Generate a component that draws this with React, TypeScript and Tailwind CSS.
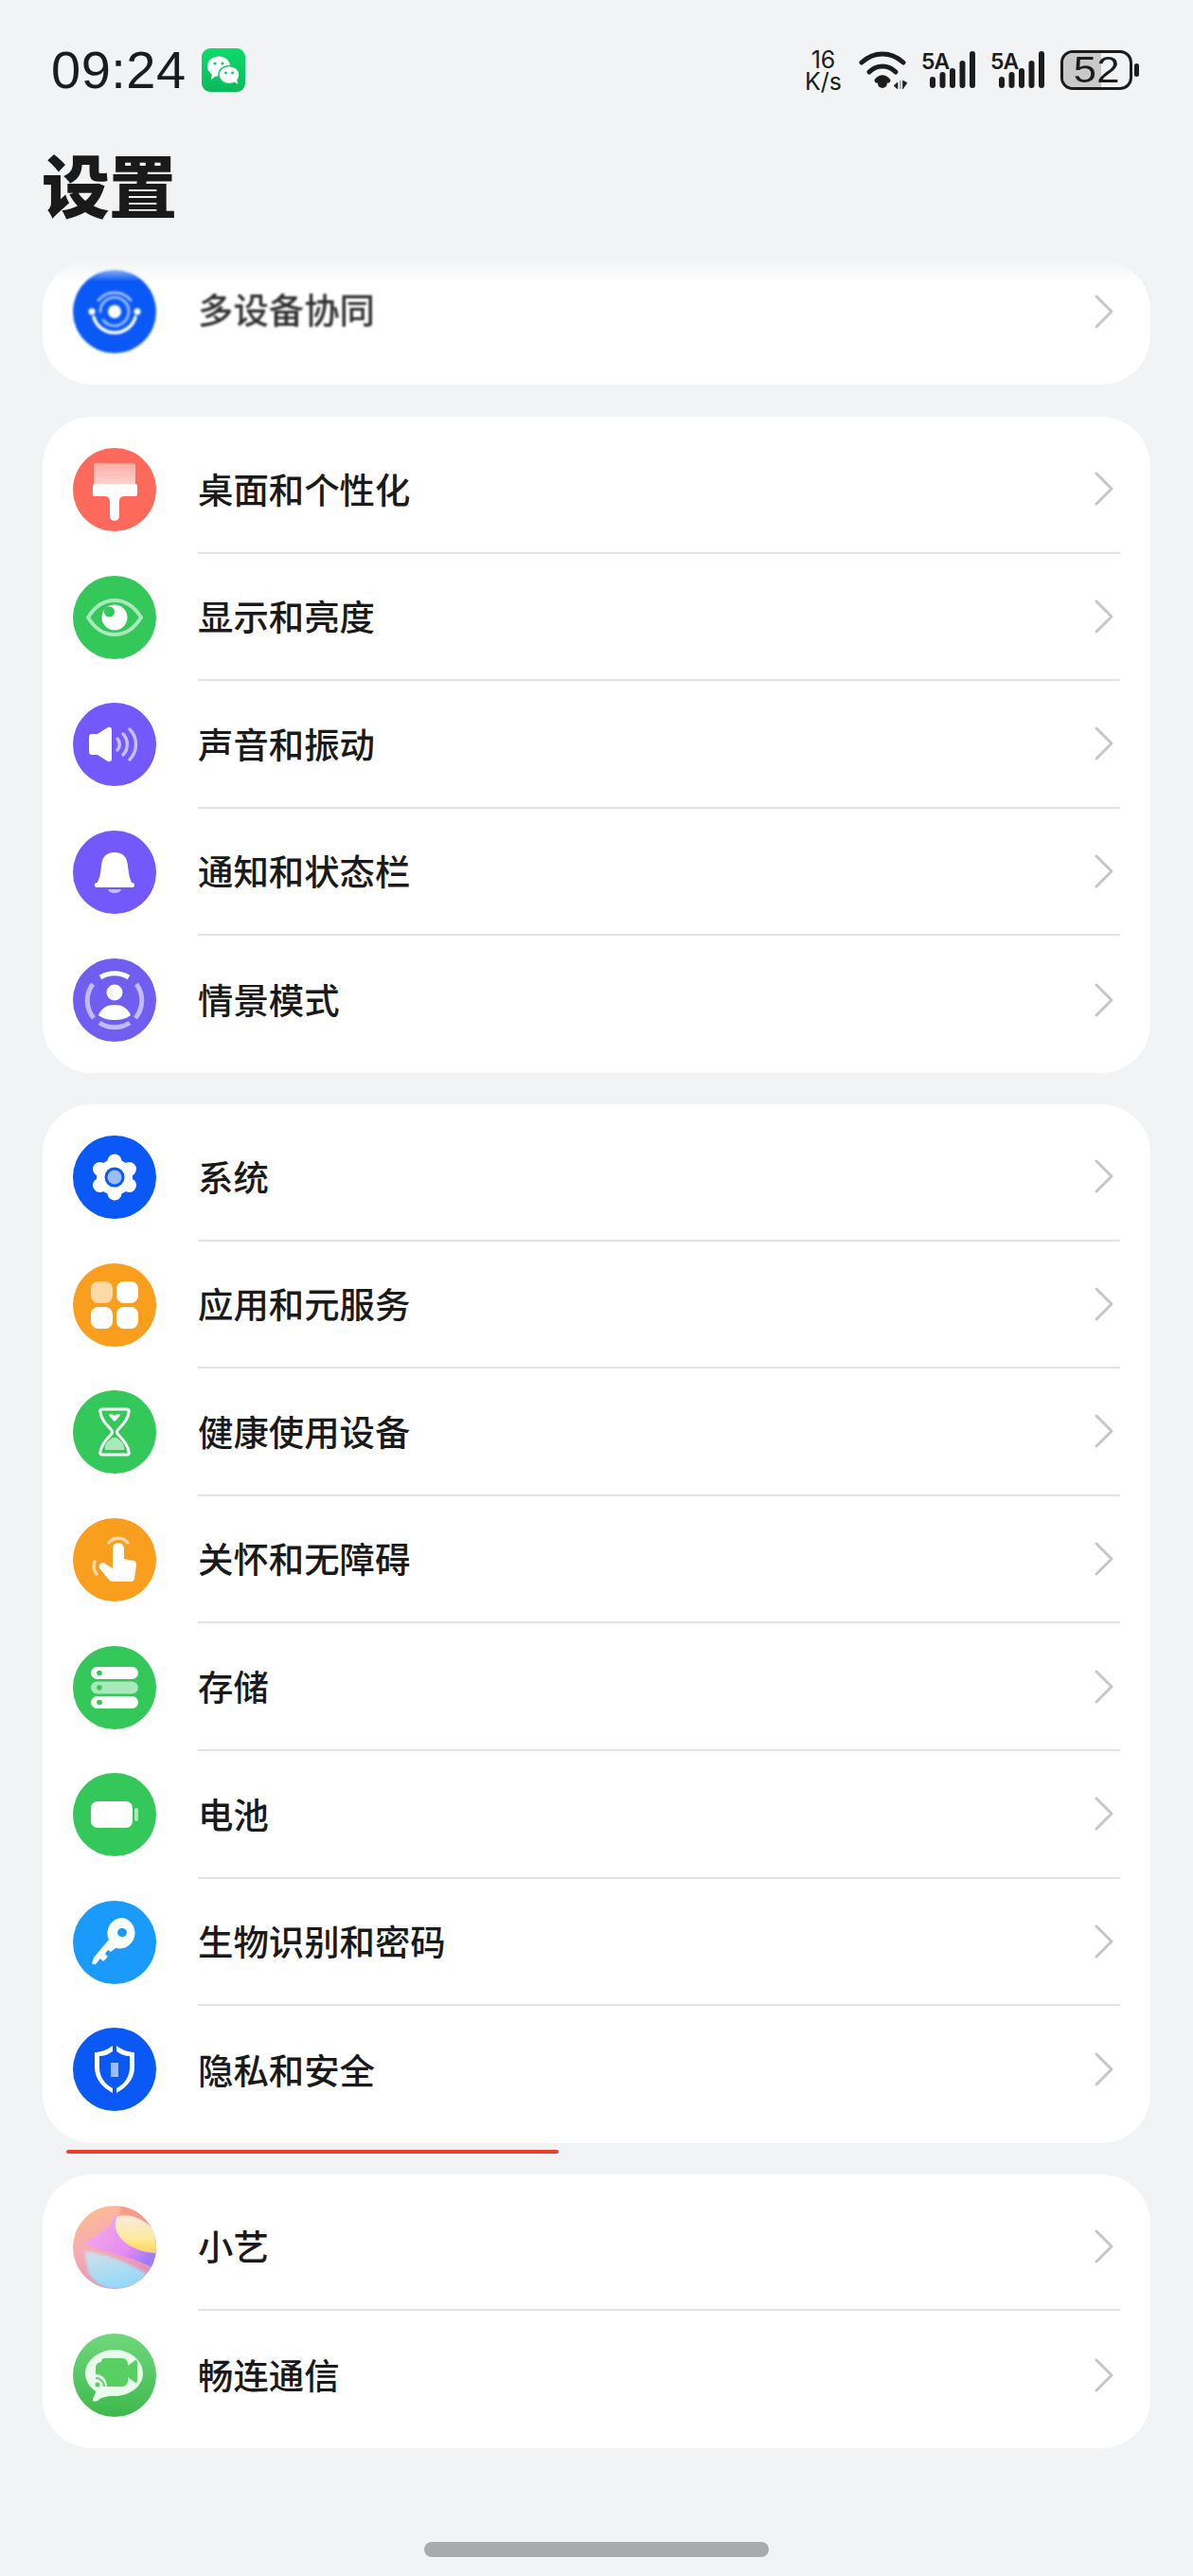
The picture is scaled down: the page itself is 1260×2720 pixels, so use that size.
import React from 'react';

const Chevron = () => (
  <svg width="22" height="38" viewBox="0 0 22 38" fill="none" className="shrink-0">
    <path d="M3 3 L19 19 L3 35" stroke="#c6c6c6" strokeWidth="3" strokeLinecap="round" strokeLinejoin="round" />
  </svg>
);

const Circle: React.FC<{ bg: string; children: React.ReactNode }> = ({ bg, children }) => (
  <svg width="88" height="88" viewBox="0 0 88 88" className="shrink-0">
    <circle cx="44" cy="44" r="44" fill={bg} />
    {children}
  </svg>
);

const MultiDevice = () => (
  <Circle bg="#0a59f7">
    <g fill="none" strokeLinecap="round">
      <path d="M22 50 A23 23 0 0 0 66 50" stroke="#fff" strokeWidth="3.5" />
      <path d="M27 32 A22 22 0 0 1 61 32" stroke="#fff" strokeOpacity="0.6" strokeWidth="3" />
      <path d="M29 44 A15 15 0 0 1 59 44 M59 44 A15 15 0 0 1 32 53" stroke="#fff" strokeOpacity="0.55" strokeWidth="3" />
    </g>
    <circle cx="44" cy="44" r="7" fill="#fff" />
    <circle cx="20" cy="44" r="3.5" fill="#fff" />
    <circle cx="68" cy="44" r="3.5" fill="#fff" />
  </Circle>
);

const Brush = () => (
  <Circle bg="#fd6a5b">
    <defs>
      <linearGradient id="brushHead" x1="0" y1="0" x2="0" y2="1">
        <stop offset="0" stopColor="#fbaea8" />
        <stop offset="1" stopColor="#fdd3cf" />
      </linearGradient>
    </defs>
    <path d="M24 16 H64 A2 2 0 0 1 66 18 V39 H22 V18 A2 2 0 0 1 24 16Z" fill="url(#brushHead)" />
    <path d="M23 38 H66 A2 2 0 0 1 68 40 V49 A2 2 0 0 1 66 51 H54 C50 51 49 54 49 57 V72 A5 5 0 0 1 39 72 V57 C39 54 38 51 34 51 H23 A2 2 0 0 1 21 49 V40 A2 2 0 0 1 23 38Z" fill="#fff" />
  </Circle>
);

const Eye = () => (
  <Circle bg="#34c759">
    <path d="M16 44 C24 31 34 26 44 26 C54 26 64 31 72 44 C64 57 54 62 44 62 C34 62 24 57 16 44Z" fill="none" stroke="#a9e8bb" strokeWidth="4" />
    <circle cx="44" cy="44" r="13.5" fill="#fff" />
    <circle cx="38.5" cy="38" r="5.5" fill="#34c759" />
  </Circle>
);

const Speaker = () => (
  <Circle bg="#7358fb">
    <path d="M17 36 A3 3 0 0 1 20 33 H26 L37 26 A3 3 0 0 1 41 28 V60 A3 3 0 0 1 37 62 L26 55 H20 A3 3 0 0 1 17 52Z" fill="#fff" />
    <g fill="none" stroke="#c9bdfd" strokeWidth="3.5" strokeLinecap="round">
      <path d="M47 38 A9 9 0 0 1 47 50" />
      <path d="M53 33 A16 16 0 0 1 53 55" />
      <path d="M60 28 A23 23 0 0 1 60 60" />
    </g>
  </Circle>
);

const Bell = () => (
  <Circle bg="#7358fb">
    <path d="M44 23 C35 23 31 28 30 37 C29 46 28 52 25 56 H63 C60 52 59 46 58 37 C57 28 53 23 44 23Z" fill="#fff" />
    <rect x="23" y="55" width="42" height="5" rx="2.5" fill="#fff" />
    <path d="M37 62 H51 A7 4 0 0 1 37 62Z" fill="#c9bdfd" />
  </Circle>
);

const Scene = () => (
  <Circle bg="#6f5ef0">
    <g fill="none" stroke="#c3baf9" strokeWidth="5">
      <path d="M29 20 A29 29 0 0 1 59 20" stroke="#fff" />
      <path d="M21 27 A29 29 0 0 0 22 63" />
      <path d="M67 27 A29 29 0 0 1 66 63" />
      <path d="M28 68 A29 29 0 0 0 60 68" />
    </g>
    <circle cx="44" cy="36" r="8.5" fill="#fff" />
    <path d="M27 60 C30 52 37 49 44 49 C51 49 58 52 61 60 C56 64 50 65 44 65 C38 65 32 64 27 60Z" fill="#fff" />
  </Circle>
);

const Gear = () => (
  <Circle bg="#0a59f7">
    <circle cx="44" cy="44" r="19" fill="#fff" />
    <circle cx="44" cy="27" r="7.5" fill="#fff" />
    <circle cx="59.5" cy="35.5" r="7.5" fill="#fff" />
    <circle cx="59.5" cy="52.5" r="7.5" fill="#fff" />
    <circle cx="44" cy="61" r="7.5" fill="#fff" />
    <circle cx="28.5" cy="52.5" r="7.5" fill="#fff" />
    <circle cx="28.5" cy="35.5" r="7.5" fill="#fff" />
    <circle cx="44" cy="44" r="10.5" fill="#0a59f7" />
    <circle cx="44" cy="44" r="7.5" fill="#9cbdfb" />
  </Circle>
);

const Apps = () => (
  <Circle bg="#fa9e1e">
    <rect x="19" y="19" width="23" height="23" rx="8" fill="#fdd9a8" />
    <rect x="46" y="19" width="23" height="23" rx="8" fill="#fff" />
    <rect x="19" y="46" width="23" height="23" rx="8" fill="#fff" />
    <rect x="46" y="46" width="23" height="23" rx="8" fill="#fff" />
  </Circle>
);

const Hourglass = () => (
  <Circle bg="#34c759">
    <path d="M34 63 L54 63 C55 56 50 53 46 50 L42 50 C38 53 33 56 34 63Z" fill="#a9e8bb" />
    <path d="M31 20 H57 A2 2 0 0 1 59 23 C58 32 52 37 48 41 Q45 44 48 47 C52 51 58 57 59 65 A2 2 0 0 1 57 68 H31 A2 2 0 0 1 29 65 C30 57 36 51 40 47 Q43 44 40 41 C36 37 30 32 29 23 A2 2 0 0 1 31 20Z" fill="none" stroke="#fff" strokeWidth="3" />
    <path d="M44 33 C41 30 38 27 38 26 C39 24 42 25 44 27 C46 25 49 24 50 26 C50 27 47 30 44 33Z" fill="#fff" />
  </Circle>
);

const Hand = () => (
  <Circle bg="#fa9e1e">
    <path d="M38 26 A13 13 0 0 1 58 26" fill="none" stroke="#fdd9a8" strokeWidth="3.5" strokeLinecap="round" />
    <path d="M23 46 A13 13 0 0 0 25 59" fill="none" stroke="#fdd9a8" strokeWidth="3.5" strokeLinecap="round" />
    <path d="M42 32 A6 6 0 0 1 54 32 V43 L64 45 A4 4 0 0 1 67 49 L65 64 A4 4 0 0 1 61 67 H42 A5 5 0 0 1 38 65 L28 53 A4 4 0 0 1 34 48 L42 53Z" fill="#fff" />
  </Circle>
);

const Storage = () => (
  <Circle bg="#34c759">
    <rect x="19" y="22" width="50" height="13" rx="6.5" fill="#fff" />
    <rect x="19" y="37.5" width="50" height="13" rx="6.5" fill="#a9e8bb" />
    <rect x="19" y="53" width="50" height="13" rx="6.5" fill="#fff" />
    <circle cx="28" cy="28.5" r="2.8" fill="#34c759" />
    <circle cx="28" cy="44" r="2.8" fill="#34c759" />
    <circle cx="28" cy="59.5" r="2.8" fill="#34c759" />
  </Circle>
);

const BatteryIcon = () => (
  <Circle bg="#34c759">
    <rect x="19" y="30" width="44" height="28" rx="7" fill="#fff" />
    <rect x="65" y="37" width="4" height="14" rx="2" fill="#a9e8bb" />
  </Circle>
);

const Key = () => (
  <Circle bg="#1a9bfb">
    <path fillRule="evenodd" d="M53 18 A16 16 0 1 1 45 50 L40 54 L37 52 L34 56 L37 59 L32 64 L29 61 L25 66 A3 3 0 0 1 20 66 L22 60 L38 41 A16 16 0 0 1 53 18Z M52 29 A5 4.5 0 1 0 52 38 A5 4.5 0 1 0 52 29Z" fill="#fff" />
  </Circle>
);

const Shield = () => (
  <Circle bg="#0a59f7">
    <path d="M42 19 C35 24 29 26 23 26 V42 C23 54 31 63 42 69 V64 C34 60 28 52 28 42 V30 C33 30 38 28 42 25Z" fill="#fff" />
    <path d="M46 19 C53 24 59 26 65 26 V42 C65 54 57 63 46 69 V64 C54 60 60 52 60 42 V30 C55 30 50 28 46 25Z" fill="#fff" />
    <rect x="40" y="37" width="8" height="15" fill="#9cbdfb" />
  </Circle>
);

const Orb = () => (
  <svg width="88" height="88" viewBox="0 0 88 88" className="shrink-0">
    <defs>
      <clipPath id="orbClip"><circle cx="44" cy="44" r="44" /></clipPath>
      <filter id="orbSoft" x="-20%" y="-20%" width="140%" height="140%">
        <feGaussianBlur stdDeviation="1.6" />
      </filter>
      <linearGradient id="orbBase" x1="0" y1="0" x2="0.4" y2="1">
        <stop offset="0" stopColor="#fdc08a" />
        <stop offset="0.55" stopColor="#f6a9b4" />
        <stop offset="1" stopColor="#e88fb5" />
      </linearGradient>
      <linearGradient id="orbPink" x1="0" y1="0" x2="1" y2="0.6">
        <stop offset="0" stopColor="#f5b1e8" />
        <stop offset="0.7" stopColor="#e58bf2" />
        <stop offset="1" stopColor="#9a7dfa" />
      </linearGradient>
      <linearGradient id="orbBlue" x1="0.2" y1="0" x2="0.6" y2="1">
        <stop offset="0" stopColor="#cfe0ea" />
        <stop offset="1" stopColor="#8fd8fb" />
      </linearGradient>
      <linearGradient id="orbYellow" x1="0" y1="0" x2="0" y2="1">
        <stop offset="0" stopColor="#fbeadb" />
        <stop offset="0.6" stopColor="#fdeaa0" />
        <stop offset="0.8" stopColor="#fde26e" />
        <stop offset="1" stopColor="#fbc98a" />
      </linearGradient>
    </defs>
    <g clipPath="url(#orbClip)">
      <rect width="88" height="88" fill="url(#orbBase)" />
      <rect x="50" y="0" width="38" height="24" fill="#f4957f" opacity="0.75" filter="url(#orbSoft)" />
      <path d="M44 10 C42 22 30 28 12 40 C24 48 50 48 90 68 L90 30 Z" fill="url(#orbPink)" />
      <path d="M12 48 C36 50 62 62 78 72 C66 92 30 96 16 70 Z" fill="url(#orbBlue)" filter="url(#orbSoft)" />
      <path d="M46 12 C60 6 80 16 88 30 L88 50 C66 50 38 34 46 12Z" fill="url(#orbYellow)" />
    </g>
  </svg>
);

const Changlian = () => (
  <svg width="88" height="88" viewBox="0 0 88 88" className="shrink-0">
    <defs>
      <linearGradient id="clBg" x1="0" y1="0" x2="0" y2="1">
        <stop offset="0" stopColor="#6fd87c" />
        <stop offset="1" stopColor="#3fb84c" />
      </linearGradient>
    </defs>
    <circle cx="44" cy="44" r="44" fill="url(#clBg)" />
    <path d="M44 17 C60 17 74 28 74 42 C74 56 60 66 44 66 C38 66 32 66 26 71 C23 72 20 72 21 69 C22 66 24 64 24 61 C17 56 13 49 13 42 C13 28 28 17 44 17Z" fill="#e9fbeb" />
    <path d="M30 30 A4 4 0 0 1 34 26 H52 A6 6 0 0 1 58 32 V34 L66 28 A2 2 0 0 1 68 30 V50 A2 2 0 0 1 66 52 L58 46 V50 A6 6 0 0 1 52 56 H36 C36 48 30 42 24 41 V36 A6 6 0 0 1 30 30Z" fill="#57cf62" />
    <circle cx="26" cy="54" r="2.5" fill="#57cf62" />
    <path d="M24 47 A9 9 0 0 1 33 56 M24 42 A14 14 0 0 1 38 56" fill="none" stroke="#57cf62" strokeWidth="2" />
  </svg>
);

const WeChat = () => (
  <svg width="46" height="46" viewBox="0 0 46 46" className="ml-[16px] shrink-0">
    <defs>
      <linearGradient id="wxBg" x1="0" y1="0" x2="0" y2="1">
        <stop offset="0" stopColor="#0bdc6c" />
        <stop offset="1" stopColor="#0cb95a" />
      </linearGradient>
    </defs>
    <rect width="46" height="46" rx="9" fill="url(#wxBg)" />
    <ellipse cx="18" cy="19" rx="12" ry="10.5" fill="#fff" />
    <path d="M11 26 L10 33 L17 28Z" fill="#fff" />
    <ellipse cx="29" cy="28" rx="11" ry="9.5" stroke="#0bc964" strokeWidth="1.5" fill="#fff" />
    <path d="M34 35 L38 38 L37 32Z" fill="#fff" />
    <circle cx="14" cy="16" r="1.6" fill="#0bc964" />
    <circle cx="22" cy="16" r="1.6" fill="#0bc964" />
    <circle cx="25.5" cy="26" r="1.4" fill="#0bc964" />
    <circle cx="32.5" cy="26" r="1.4" fill="#0bc964" />
  </svg>
);

const Wifi = () => (
  <svg width="52" height="40" viewBox="0 0 52 40" className="shrink-0">
    <g fill="none" stroke="#1c1c1c" strokeWidth="5" strokeLinecap="round">
      <path d="M3 12 C16 0 34 0 47 12" />
      <path d="M11 22 C19 14 31 14 39 22" />
      <path d="M19 31 C23 27 27 27 31 31" />
    </g>
    <circle cx="25" cy="34" r="5" fill="#1c1c1c" />
    <path d="M41 33 L37 36.5 L41 40Z M44 31 V40 M46.5 31 V40 L51 33.5Z" fill="#1c1c1c" stroke="#1c1c1c" strokeWidth="0.6" />
  </svg>
);

const Signal = () => (
  <div className="relative w-[58px] h-[40px] shrink-0">
    <svg width="58" height="40" viewBox="0 0 58 40" className="block">
      <rect x="9" y="27" width="6" height="12" rx="3" fill="#1c1c1c" />
      <rect x="19.5" y="22" width="6" height="17" rx="3" fill="#1c1c1c" />
      <rect x="30" y="18" width="6" height="21" rx="3" fill="#1c1c1c" />
      <rect x="40.5" y="10" width="6" height="29" rx="3" fill="#1c1c1c" />
      <rect x="51" y="0" width="6" height="39" rx="3" fill="#1c1c1c" />
    </svg>
    <span className="absolute left-0 top-0 text-[23px] leading-[23px] font-semibold tracking-[-1px] text-[#1c1c1c] [font-family:'Inter',sans-serif]">5A</span>
  </div>
);

const BatteryStatus = () => (
  <div className="flex items-center shrink-0">
    <div className="relative w-[76px] h-[42px] rounded-[13px] border-[3px] border-[#1c1c1c] overflow-hidden bg-[#f1f3f5] flex items-center justify-center">
      <div className="absolute inset-y-0 left-0 w-[40px] bg-[#c9c9c9]" />
      <span className="relative text-[38px] leading-none text-[#1c1c1c] [font-family:'Liberation_Sans',sans-serif] scale-x-[1.15]">52</span>
    </div>
    <div className="ml-[2px] w-[5px] h-[14px] rounded-full bg-[#1c1c1c]" />
  </div>
);

type Item = { label: string; icon: React.ReactNode };

const group1: Item[] = [
  { label: '桌面和个性化', icon: <Brush /> },
  { label: '显示和亮度', icon: <Eye /> },
  { label: '声音和振动', icon: <Speaker /> },
  { label: '通知和状态栏', icon: <Bell /> },
  { label: '情景模式', icon: <Scene /> },
];

const group2: Item[] = [
  { label: '系统', icon: <Gear /> },
  { label: '应用和元服务', icon: <Apps /> },
  { label: '健康使用设备', icon: <Hourglass /> },
  { label: '关怀和无障碍', icon: <Hand /> },
  { label: '存储', icon: <Storage /> },
  { label: '电池', icon: <BatteryIcon /> },
  { label: '生物识别和密码', icon: <Key /> },
  { label: '隐私和安全', icon: <Shield /> },
];

const group3: Item[] = [
  { label: '小艺', icon: <Orb /> },
  { label: '畅连通信', icon: <Changlian /> },
];

const Row: React.FC<{ item: Item; last: boolean }> = ({ item, last }) => (
  <div className="flex items-center h-[134.6px] pl-[32px] pr-[32px]">
    {item.icon}
    <div className={`ml-[44px] flex-1 h-full flex items-center justify-between pr-[6px] ${last ? '' : 'border-b-2 border-[#e3e3e3]'}`}>
      <span className="text-[37.4px] leading-none font-medium text-[#1a1a1a]">{item.label}</span>
      <Chevron />
    </div>
  </div>
);

const Group: React.FC<{ items: Item[] }> = ({ items }) => (
  <div className="bg-white rounded-[52px] py-[10px]">
    {items.map((item, i) => (
      <Row key={item.label} item={item} last={i === items.length - 1} />
    ))}
  </div>
);

export default function App() {
  return (
    <div className="w-[1260px] h-[2720px] bg-[#f1f3f5] flex flex-col overflow-hidden text-[#1a1a1a] [font-family:'Noto_Sans_CJK_SC','Noto_Sans',sans-serif]">
      {/* status bar */}
      <div className="flex items-center justify-between pt-[51px] pl-[54px] pr-[57px] h-[97px]">
        <div className="flex items-center">
          <span className="w-[143px] text-[56px] leading-none tracking-[0.5px] text-[#1c1c1c] [font-family:'Liberation_Sans',sans-serif]">09:24</span>
          <WeChat />
        </div>
        <div className="flex items-center">
          <div className="flex flex-col items-center text-[#1c1c1c] [font-family:'Inter',sans-serif]">
            <span className="text-[25px] leading-[23px]">16</span>
            <span className="text-[25px] leading-[22px]">K/s</span>
          </div>
          <div className="ml-[18px]"><Wifi /></div>
          <div className="ml-[14px]"><Signal /></div>
          <div className="ml-[15px]"><Signal /></div>
          <div className="ml-[16px]"><BatteryStatus /></div>
        </div>
      </div>

      {/* title */}
      <h1 className="mt-[60px] ml-[44px] text-[72px] leading-[72px] font-black tracking-[-1px] text-[#1a1a1a]">设置</h1>

      <div className="mt-[46px] px-[45px] flex flex-col">
        {/* partly scrolled away row */}
        <div className="relative h-[131px] bg-white rounded-[52px] overflow-hidden flex flex-col justify-end pb-[10px]">
          <div className="flex items-center h-[134.6px] shrink-0 pl-[32px] pr-[32px]">
            <div className="blur-[1px] shrink-0"><MultiDevice /></div>
            <div className="ml-[44px] flex-1 flex items-center justify-between pr-[6px]">
              <span className="text-[37.4px] leading-none font-medium text-[#2e2e2e] blur-[1px] -translate-y-[2px]">多设备协同</span>
              <Chevron />
            </div>
          </div>
          <div className="absolute inset-x-0 top-0 h-[22px] bg-gradient-to-b from-[#f1f3f5] to-transparent" />
        </div>

        <div className="mt-[34px]"><Group items={group1} /></div>
        <div className="mt-[33px]"><Group items={group2} /></div>
        <div className="mt-[7px] ml-[25px] w-[520px] h-[4px] rounded-full bg-[#e8402a]" />
        <div className="mt-[22px]"><Group items={group3} /></div>
      </div>

      {/* home indicator */}
      <div className="mt-auto mb-[20px] mx-auto w-[364px] h-[16px] rounded-full bg-[#a9aaac]" />
    </div>
  );
}
